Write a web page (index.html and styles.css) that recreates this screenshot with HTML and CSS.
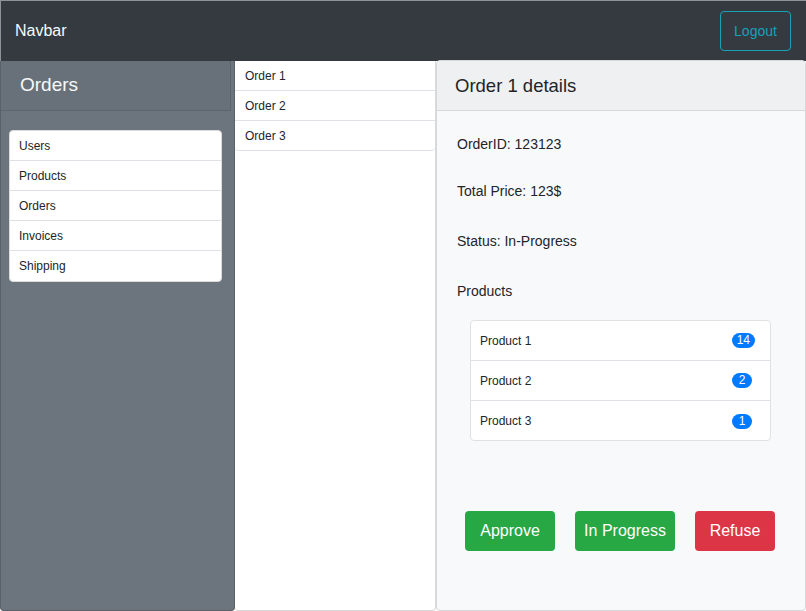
FILE: index.html
```html
<!DOCTYPE html>
<html>
<head>
<meta charset="utf-8">
<link rel="stylesheet" href="styles.css">
</head>
<body>
<nav class="navbar">
  <span class="brand">Navbar</span>
  <button class="btn-logout">Logout</button>
</nav>
<div class="main">
  <aside class="side">
    <div class="side-header">Orders</div>
    <ul class="menu">
      <li>Users</li>
      <li>Products</li>
      <li>Orders</li>
      <li>Invoices</li>
      <li>Shipping</li>
    </ul>
  </aside>
  <section class="orders">
    <ul class="order-list">
      <li>Order 1</li>
      <li>Order 2</li>
      <li>Order 3</li>
    </ul>
  </section>
  <section class="details">
    <div class="details-header">Order 1 details</div>
    <div class="details-body">
      <p class="line l1">OrderID: 123123</p>
      <p class="line l2">Total Price: 123$</p>
      <p class="line l3">Status: In-Progress</p>
      <p class="line l3">Products</p>
      <ul class="products">
        <li><span>Product 1</span><span class="badge">14</span></li>
        <li><span>Product 2</span><span class="badge b1">2</span></li>
        <li><span>Product 3</span><span class="badge b1">1</span></li>
      </ul>
      <div class="actions">
        <button class="btn green w90">Approve</button>
        <button class="btn green w100">In Progress</button>
        <button class="btn red w80">Refuse</button>
      </div>
    </div>
  </section>
</div>
</body>
</html>
```
FILE: styles.css
```css
* { box-sizing: border-box; }
html, body { margin: 0; padding: 0; }
body {
  width: 806px;
  height: 611px;
  overflow: hidden;
  font-family: "Liberation Sans", Arial, sans-serif;
  color: #212529;
  background: #fff;
}
ul { list-style: none; margin: 0; padding: 0; }
p { margin: 0; }
button { font-family: inherit; cursor: pointer; }

.navbar {
  height: 61px;
  background: #343a40;
  border-top: 1px solid #8d9296;
  border-left: 1px solid #8d9296;
  display: flex;
  align-items: center;
  justify-content: space-between;
  padding: 0 15px 0 14px;
}
.brand { color: #f8f9fa; font-size: 16px; padding-bottom: 1px; }
.btn-logout {
  width: 71px;
  height: 40px;
  background: transparent;
  border: 1px solid #17a2b8;
  border-radius: 4px;
  color: #17a2b8;
  font-size: 14px;
  padding: 0;
}

.main {
  display: flex;
  height: 550px;
}
.side {
  width: 235px;
  background: #6c757d;
  border: 1px solid #5a6168;
  border-top: none;
  border-radius: 0 0 4px 4px;
  padding-right: 3px;
}
.side-header {
  height: 50px;
  border-bottom: 1px solid #5c646b;
  border-right: 1px solid #5c646b;
  background: rgba(0,0,0,0.03);
  color: #f8f9fa;
  font-size: 19px;
  padding: 13px 0 0 19px;
}
.menu {
  margin: 19px 9px 0 8px;
  background: #fff;
  border: 1px solid #dcdcdc;
  border-radius: 4px;
}
.menu li {
  height: 30px;
  line-height: 30px;
  font-size: 12px;
  padding-left: 9px;
  border-bottom: 1px solid #dee2e6;
}
.menu li:last-child { border-bottom: none; }

.orders {
  width: 201px;
  background: #fff;
  border: 1px solid #dadada;
  border-top: none;
  border-left: none;
  border-radius: 0 0 4px 4px;
}
.order-list li {
  height: 30px;
  line-height: 30px;
  font-size: 12px;
  padding-left: 10px;
  border-bottom: 1px solid #dee2e6;
}
.order-list li:last-child { border-radius: 0 0 4px 4px; }

.details {
  width: 370px;
  background: #f8f9fa;
  border: 1px solid #d6d8da;
  border-radius: 4px;
  margin-top: -1px;
}
.details-header {
  height: 50px;
  background: #eff0f1;
  border-bottom: 1px solid #d6d8da;
  border-radius: 4px 4px 0 0;
  font-size: 18.5px;
  padding: 14px 0 0 18px;
}
.details-body { padding: 25px 20px 0 20px; }
.line { font-size: 14px; height: 16px; line-height: 16px; }
.l2 { margin-top: 31px; }
.l3 { margin-top: 34px; }
.products {
  margin: 21px 14px 0 13px;
  background: #fff;
  border: 1px solid #dfe1e3;
  border-radius: 4px;
}
.products li {
  height: 40px;
  display: flex;
  align-items: center;
  justify-content: space-between;
  font-size: 12px;
  padding: 0 15px 0 9px;
  border-bottom: 1px solid #dee2e6;
}
.products li:last-child { border-bottom: none; height: 39px; padding-top: 1px; }
.badge {
  background: #007bff;
  color: #fff;
  border-radius: 8px;
  font-size: 12px;
  line-height: 15px;
  height: 15px;
  padding: 0 5px;
  min-width: 20px;
  text-align: center;
}
.b1 { margin-right: 3px; }

.actions {
  display: flex;
  gap: 20px;
  margin-top: 70px;
  padding-left: 8px;
}
.btn {
  height: 40px;
  border: none;
  border-radius: 4px;
  color: #fff;
  font-size: 16px;
  padding: 0;
}
.green { background: #28a745; }
.red { background: #dc3545; }
.w90 { width: 90px; }
.w100 { width: 100px; }
.w80 { width: 80px; }
```
